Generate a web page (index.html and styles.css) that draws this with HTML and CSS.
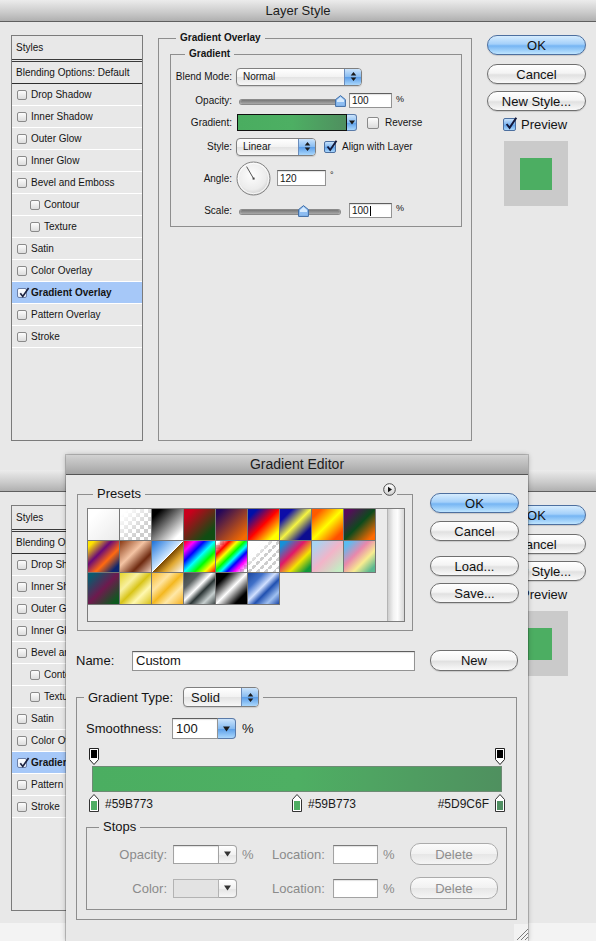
FILE: index.html
```html
<!DOCTYPE html>
<html>
<head>
<meta charset="utf-8">
<title>Layer Style / Gradient Editor</title>
<link rel="stylesheet" href="styles.css">
</head>
<body>
<div class="screen">

  <section class="win ls ls-top">
    <header class="titlebar">Layer Style</header>
    <div class="ls-body">
      <ul class="stylelist">
        <li class="head">Styles</li>
        <li class="blend">Blending Options: Default</li>
        <li><span class="cb"></span>Drop Shadow</li>
        <li><span class="cb"></span>Inner Shadow</li>
        <li><span class="cb"></span>Outer Glow</li>
        <li><span class="cb"></span>Inner Glow</li>
        <li><span class="cb"></span>Bevel and Emboss</li>
        <li class="sub"><span class="cb"></span>Contour</li>
        <li class="sub"><span class="cb"></span>Texture</li>
        <li><span class="cb"></span>Satin</li>
        <li><span class="cb"></span>Color Overlay</li>
        <li class="sel"><span class="cb chk"><svg width="12" height="12" viewBox="0 0 12 12"><path d="M2.3 6.2 L4.8 9.4 L10.6 1" fill="none" stroke="#1d2340" stroke-width="1.7"/></svg></span>Gradient Overlay</li>
        <li><span class="cb"></span>Pattern Overlay</li>
        <li><span class="cb"></span>Stroke</li>
      </ul>
      <div class="group g-outer">
        <span class="gtitle">Gradient Overlay</span>
        <div class="group g-inner">
          <span class="gtitle">Gradient</span>
          <div class="frow h25"><span class="lbl">Blend Mode:</span><div class="popup pw126"><span class="val">Normal</span><span class="arr"><svg width="7" height="11" viewBox="0 0 7 11"><path d="M3.5 1 6.3 4.5H.7z M3.5 10 .7 6.5h5.6z" fill="#1a1a1a"/></svg></span></div></div>
          <div class="frow h23"><span class="lbl">Opacity:</span><div class="slider"><span class="thumb" style="left:100%"><svg width="11" height="12" viewBox="0 0 11 12"><path d="M5.5 .6 L10.4 4.6 V11.4 H.6 V4.6 Z" fill="#8dbdf2" stroke="#3d6aa3"/><path d="M5.5 2 L9 5 V7 H2 V5 Z" fill="#d6eafd"/></svg></span></div><span class="fld num">100</span><span class="unit u2">%</span></div>
          <div class="frow h21"><span class="lbl">Gradient:</span><div class="gswatch"><span class="gfill"></span><span class="garr"><svg width="6" height="5" viewBox="0 0 6 5"><path d="M0 .5h6l-3 4z" fill="#1a1a1a"/></svg></span></div><span class="cb c12 ml10"></span><span class="cbl">Reverse</span></div>
          <div class="frow h27"><span class="lbl">Style:</span><div class="popup pw80"><span class="val">Linear</span><span class="arr"><svg width="7" height="11" viewBox="0 0 7 11"><path d="M3.5 1 6.3 4.5H.7z M3.5 10 .7 6.5h5.6z" fill="#1a1a1a"/></svg></span></div><span class="cb c12 on ml8"><svg width="13" height="13" viewBox="0 0 13 13"><path d="M2.5 6.5 L5.2 10 L11.5 .8" fill="none" stroke="#14183a" stroke-width="1.9"/></svg></span><span class="cbl">Align with Layer</span></div>
          <div class="frow h36"><span class="lbl">Angle:</span><svg class="dial" width="35" height="35" viewBox="0 0 35 35"><defs><radialGradient id="dg1" cx="45%" cy="40%" r="62%"><stop offset="0" stop-color="#fdfdfd"/><stop offset=".7" stop-color="#ececec"/><stop offset="1" stop-color="#cdcdcd"/></radialGradient></defs><circle cx="17.5" cy="17.5" r="16.5" fill="url(#dg1)" stroke="#838383"/><circle cx="17.5" cy="17.5" r="15.2" fill="none" stroke="#fff" stroke-opacity=".8"/><line x1="17.5" y1="17.5" x2="10.6" y2="5.6" stroke="#555" stroke-width="1"/><rect x="16.6" y="16.6" width="2" height="2" fill="#444"/></svg><span class="fld ang">120</span><span class="unit u5">°</span></div>
          <div class="frow h29"><span class="lbl">Scale:</span><div class="slider"><span class="thumb" style="left:63%"><svg width="11" height="12" viewBox="0 0 11 12"><path d="M5.5 .6 L10.4 4.6 V11.4 H.6 V4.6 Z" fill="#8dbdf2" stroke="#3d6aa3"/><path d="M5.5 2 L9 5 V7 H2 V5 Z" fill="#d6eafd"/></svg></span></div><span class="fld num">100<i class="caret"></i></span><span class="unit u6">%</span></div>
        </div>
      </div>
      <div class="side">
        <div class="btn dflt">OK</div>
        <div class="btn mt9">Cancel</div>
        <div class="btn mt7">New Style...</div>
        <div class="prevrow"><span class="cb c13 on"><svg width="14" height="14" viewBox="0 0 14 14"><path d="M2.6 7 L5.6 10.8 L12.3 .8" fill="none" stroke="#14183a" stroke-width="2"/></svg></span>Preview</div>
        <div class="prevbox"><div class="prevsq"></div></div>
      </div>
    </div>
  </section>

  <section class="win ls ls-back">
    <header class="titlebar">Layer Style</header>
    <div class="ls-body">
      <ul class="stylelist">
        <li class="head">Styles</li>
        <li class="blend">Blending Options: Default</li>
        <li><span class="cb"></span>Drop Shadow</li>
        <li><span class="cb"></span>Inner Shadow</li>
        <li><span class="cb"></span>Outer Glow</li>
        <li><span class="cb"></span>Inner Glow</li>
        <li><span class="cb"></span>Bevel and Emboss</li>
        <li class="sub"><span class="cb"></span>Contour</li>
        <li class="sub"><span class="cb"></span>Texture</li>
        <li><span class="cb"></span>Satin</li>
        <li><span class="cb"></span>Color Overlay</li>
        <li class="sel"><span class="cb chk"><svg width="12" height="12" viewBox="0 0 12 12"><path d="M2.3 6.2 L4.8 9.4 L10.6 1" fill="none" stroke="#1d2340" stroke-width="1.7"/></svg></span>Gradient Overlay</li>
        <li><span class="cb"></span>Pattern Overlay</li>
        <li><span class="cb"></span>Stroke</li>
      </ul>
      <div class="group g-outer">
        <span class="gtitle">Gradient Overlay</span>
        <div class="group g-inner">
          <span class="gtitle">Gradient</span>
        </div>
      </div>
      <div class="side">
        <div class="btn dflt">OK</div>
        <div class="btn mt9">Cancel</div>
        <div class="btn mt7">New Style...</div>
        <div class="prevrow"><span class="cb c13 on"><svg width="14" height="14" viewBox="0 0 14 14"><path d="M2.6 7 L5.6 10.8 L12.3 .8" fill="none" stroke="#14183a" stroke-width="2"/></svg></span>Preview</div>
        <div class="prevbox"><div class="prevsq"></div></div>
      </div>
    </div>
  </section>

  <section class="win ge">
    <header class="titlebar">Gradient Editor</header>
    <div class="ge-top">
      <div class="group g-presets">
        <span class="gtitle">Presets</span>
        <span class="menu-btn"><svg width="13" height="13" viewBox="0 0 13 13"><defs><linearGradient id="mg" x1="0" y1="0" x2="0" y2="1"><stop offset="0" stop-color="#ffffff"/><stop offset="1" stop-color="#cfcfcf"/></linearGradient></defs><circle cx="6.5" cy="6.5" r="5.8" fill="url(#mg)" stroke="#4a4a4a"/><path d="M5 3.7 L9 6.5 L5 9.3Z" fill="#111"/></svg></span>
        <div class="swpanel">
          <div class="swgrid">
            <span class="sw p1"></span><span class="sw p2"></span><span class="sw p3"></span><span class="sw p4"></span><span class="sw p5"></span><span class="sw p6"></span><span class="sw p7"></span><span class="sw p8"></span><span class="sw p9"></span>
            <span class="sw p10"></span><span class="sw p11"></span><span class="sw p12"></span><span class="sw p13"></span><span class="sw p14"></span><span class="sw p15"></span><span class="sw p16"></span><span class="sw p17"></span><span class="sw p18"></span>
            <span class="sw p19"></span><span class="sw p20"></span><span class="sw p21"></span><span class="sw p22"></span><span class="sw p23"></span><span class="sw p24"></span>
          </div>
          <div class="scroll"></div>
        </div>
      </div>
      <div class="ge-btns">
        <div class="btn dflt">OK</div>
        <div class="btn mt8">Cancel</div>
        <div class="btn mt15">Load...</div>
        <div class="btn mt7">Save...</div>
      </div>
    </div>

    <div class="namerow"><span class="lbl">Name:</span><span class="fld name-fld">Custom</span><div class="btn newbtn">New</div></div>

    <div class="group g-type">
      <div class="type-title">Gradient Type:<div class="popup ptype"><span class="val">Solid</span><span class="arr"><svg width="7" height="11" viewBox="0 0 7 11"><path d="M3.5 1 6.3 4.5H.7z M3.5 10 .7 6.5h5.6z" fill="#1a1a1a"/></svg></span></div></div>
      <div class="srow"><span class="lbl">Smoothness:</span><div class="combo"><span class="fld">100</span><span class="darr blue"><svg width="7" height="6" viewBox="0 0 7 6"><path d="M0 .5h7l-3.5 5z" fill="#1a1a1a"/></svg></span></div><span class="pctl">%</span></div>

      <div class="gwrap">
        <div class="track otrack">
          <span class="ostop" style="left:0%"><svg width="10" height="17" viewBox="0 0 10 17"><path d="M.5 .5h9v11l-4.5 5-4.5-5z" fill="#fff" stroke="#222"/><rect x="2" y="2" width="6" height="8" fill="#000"/></svg></span>
          <span class="ostop" style="left:100%"><svg width="10" height="17" viewBox="0 0 10 17"><path d="M.5 .5h9v11l-4.5 5-4.5-5z" fill="#fff" stroke="#222"/><rect x="2" y="2" width="6" height="8" fill="#000"/></svg></span>
        </div>
        <div class="gbar"></div>
        <div class="track ctrack">
          <span class="cstop" style="left:0%"><svg width="10" height="18" viewBox="0 0 10 18"><path d="M.5 17.5v-12l4.5-5 4.5 5v12z" fill="#fff" stroke="#333"/><rect x="2" y="7" width="6" height="9" fill="#4fae63"/></svg><span class="clbl">#59B773</span></span>
          <span class="cstop" style="left:50%"><svg width="10" height="18" viewBox="0 0 10 18"><path d="M.5 17.5v-12l4.5-5 4.5 5v12z" fill="#fff" stroke="#333"/><rect x="2" y="7" width="6" height="9" fill="#4fae63"/></svg><span class="clbl">#59B773</span></span>
          <span class="cstop end" style="left:100%"><svg width="10" height="18" viewBox="0 0 10 18"><path d="M.5 17.5v-12l4.5-5 4.5 5v12z" fill="#fff" stroke="#333"/><rect x="2" y="7" width="6" height="9" fill="#508f62"/></svg><span class="clbl">#5D9C6F</span></span>
        </div>
      </div>

      <div class="group g-stops">
        <span class="gtitle">Stops</span>
        <div class="strow r1"><span class="lbl">Opacity:</span><span class="fld sf"></span><span class="darr gray"><svg width="7" height="6" viewBox="0 0 7 6"><path d="M0 .5h7l-3.5 5z" fill="#333"/></svg></span><span class="pct">%</span><span class="loc">Location:</span><span class="fld lf"></span><span class="pct2">%</span><div class="btn dis">Delete</div></div>
        <div class="strow r2"><span class="lbl">Color:</span><span class="well"></span><span class="darr gray"><svg width="7" height="6" viewBox="0 0 7 6"><path d="M0 .5h7l-3.5 5z" fill="#333"/></svg></span><span class="pct"></span><span class="loc">Location:</span><span class="fld lf"></span><span class="pct2">%</span><div class="btn dis">Delete</div></div>
      </div>
    </div>

    <div class="grip"><svg width="13" height="13" viewBox="0 0 13 13"><path d="M2 13 L13 2 M6 13 L13 6 M10 13 L13 10" stroke="#7a7a7a" stroke-width="1"/></svg></div>
  </section>

</div>
</body>
</html>
```

FILE: styles.css
```css
* { box-sizing: border-box; }
html, body { margin: 0; padding: 0; }
body {
  background: #f3f3f3;
  font-family: "Liberation Sans", Arial, sans-serif;
  color: #141414;
}
.screen { position: relative; width: 596px; height: 941px; overflow: hidden; }

/* windows placed on the "desktop" */
.win { position: absolute; background: #e8e8e8; }
.ls { left: 0; width: 596px; }
.ls-top { top: 0; height: 470px; }
.ls-back { top: 470px; height: 453px; }
.ge {
  left: 66px; top: 455px; width: 462px; height: 486px;
  box-shadow: 0 0 0 1px rgba(0,0,0,.18), 0 0 5px rgba(0,0,0,.28);
}

.titlebar {
  height: 22px;
  border-bottom: 1px solid #5f5f5f;
  background: linear-gradient(#ececec, #cdcdcd 55%, #b0b0b0);
  text-align: center;
  font-size: 13px;
  line-height: 21px;
  color: #1c1c1c;
}
.ge .titlebar {
  height: 20px;
  line-height: 19px;
  font-size: 14px;
  background: linear-gradient(#d2d2d2, #b9b9b9 55%, #a4a4a4);
  border-bottom-color: #555;
}

/* ---------- Layer Style ---------- */
.ls-body { display: flex; align-items: flex-start; padding: 13px 0 0 11px; }

.stylelist {
  list-style: none; margin: 0; padding: 0;
  width: 132px; height: 406px; flex: none;
  border: 1px solid #7b7b7b;
  font-size: 10px;
}
.stylelist li {
  display: flex; align-items: center; gap: 4px;
  height: 22px; padding-left: 5px;
  border-bottom: 1px solid #fff;
  white-space: nowrap; overflow: hidden;
}
.stylelist li.head { height: 26px; border-bottom: 3px double #3a3a3a; padding-left: 4px; }
.stylelist li.blend { border-bottom-color: #2e2e2e; padding-left: 4px; }
.stylelist li.sub { padding-left: 18px; }
.stylelist li.sel { background: #a6c8f8; font-weight: bold; }

.cb {
  position: relative; flex: none;
  width: 10px; height: 10px;
  border: 1px solid #8a8a8a; border-radius: 2px;
  background: linear-gradient(#fdfdfd, #dcdcdc);
}
.cb svg { position: absolute; left: 0; top: -2px; overflow: visible; }
.cb.chk { border-color: #6b7fa8; background: linear-gradient(#ffffff, #e4ecf8); }
.cb.c12 { width: 12px; height: 12px; }
.cb.c13 { width: 13px; height: 13px; }
.cb.on { border-color: #4c6f9f; background: linear-gradient(#c8e2fc, #7db4ef 50%, #5c9fe9 51%, #aad7fc); }
.ml10 { margin-left: 10px; }
.ml8 { margin-left: 8px; }
.cbl { margin-left: 6px; white-space: nowrap; }

.group { position: relative; border: 1px solid #8e8e8e; flex: none; }
.gtitle {
  position: absolute; top: -7px;
  padding: 0 4px; background: #e8e8e8;
  font-size: 10px; line-height: 12px; font-weight: bold;
  white-space: nowrap;
}
.g-outer { margin: 3px 0 0 15px; width: 314px; height: 403px; }
.g-outer > .gtitle { left: 17px; }
.g-inner { margin: 15px 0 0 11px; width: 292px; height: 173px; padding-top: 9px; }
.g-inner > .gtitle { left: 14px; }

.frow { display: flex; align-items: center; font-size: 10px; }
.frow > .lbl { flex: none; width: 61px; margin-right: 4px; text-align: right; white-space: nowrap; }
.h25 { height: 25px; } .h23 { height: 23px; } .h21 { height: 21px; }
.h27 { height: 27px; } .h36 { height: 36px; } .h29 { height: 29px; }

.popup {
  display: flex; flex: none;
  height: 18px;
  border: 1px solid #7f7f7f; border-radius: 4px;
  background: linear-gradient(#ffffff, #f2f2f2 50%, #e3e3e3 51%, #f7f7f7);
  box-shadow: 0 1px 1px rgba(0,0,0,.12);
  overflow: hidden;
}
.popup .val { flex: 1; padding-left: 6px; display: flex; align-items: center; }
.popup .arr {
  width: 17px; display: flex; align-items: center; justify-content: center;
  border-left: 1px solid #6a8cbc;
  background: linear-gradient(#cbe4fc, #86bbf1 50%, #5a9de8 51%, #aad7fc);
}
.pw126 { width: 126px; }
.pw80 { width: 80px; }

.slider {
  position: relative; flex: none;
  width: 100px; height: 4px; margin: 2px 0 0 4px;
  border-radius: 2px;
  background: linear-gradient(#777, #a9a9a9);
  box-shadow: 0 0 0 1px #8a8a8a;
}
.thumb { position: absolute; top: -5px; margin-left: -5.5px; width: 11px; height: 12px; }
.thumb svg { display: block; }

.fld {
  flex: none;
  display: flex; align-items: center;
  height: 15px;
  background: #fff;
  border: 1px solid #939393; border-top-color: #5f5f5f;
  box-shadow: inset 0 1px 1px rgba(0,0,0,.12);
  padding-left: 2px;
  font-size: 10px;
}
.fld.num { width: 43px; margin-left: 9px; }
.fld.ang { width: 49px; height: 16px; margin-left: 6px; }
.caret { display: inline-block; width: 1px; height: 10px; background: #000; margin-left: 1px; }
.unit { margin-left: 4px; font-size: 9px; align-self: flex-start; }
.u2 { margin-top: 5px; }
.u5 { margin-top: 10px; }
.u6 { margin-top: 7px; }
.dial { flex: none; display: block; }

.gswatch { display: flex; flex: none; width: 120px; height: 17px; margin-left: 1px; }
.gfill {
  flex: 1; border: 1px solid #111;
  background: linear-gradient(to right, #4aad60 0%, #4daf63 50%, #4e9f61 75%, #4f8f5f 100%);
}
.garr {
  width: 10px; display: flex; align-items: center; justify-content: center;
  border: 1px solid #5a7aa8; border-left: 0; border-radius: 0 3px 3px 0;
  background: linear-gradient(#cbe4fc, #86bbf1 50%, #5a9de8 51%, #aad7fc);
}

.side { margin-left: 15px; width: 99px; flex: none; display: flex; flex-direction: column; }
.btn {
  display: flex; align-items: center; justify-content: center;
  height: 20px; flex: none;
  border: 1px solid #6f6f6f; border-radius: 10px;
  background: linear-gradient(#ffffff, #f4f4f4 45%, #e1e1e1 55%, #f9f9f9);
  box-shadow: 0 1px 1px rgba(0,0,0,.14);
  font-size: 13px; color: #111; white-space: nowrap;
}
.btn.dflt { border-color: #4d6f9f; background: linear-gradient(#d6ecfe, #a4d0fa 45%, #76b5f3 55%, #bfe5ff); }
.btn.dis { border-color: #ababab; color: #8e8e8e; background: linear-gradient(#fbfbfb, #f1f1f1 50%, #e6e6e6 51%, #f5f5f5); box-shadow: none; }
.mt7 { margin-top: 7px; } .mt8 { margin-top: 8px; } .mt9 { margin-top: 9px; } .mt15 { margin-top: 15px; }

.prevrow { display: flex; align-items: center; gap: 5px; margin-top: 6px; height: 15px; padding-left: 16px; font-size: 13px; }
.prevbox { margin: 9px 0 0 17px; width: 64px; height: 65px; background: #cacaca; padding: 17px 0 0 16px; }
.prevsq { width: 32px; height: 32px; background: #4cae62; }

/* ---------- Gradient Editor ---------- */
.ge-top { display: flex; align-items: flex-start; }
.g-presets { margin: 19px 0 0 11px; width: 336px; height: 137px; }
.g-presets > .gtitle, .g-stops > .gtitle { top: -9px; font-size: 13px; line-height: 16px; font-weight: normal; }
.g-presets > .gtitle { left: 15px; }
.menu-btn { position: absolute; left: 304px; top: -12px; width: 15px; height: 14px; background: #e8e8e8; padding-left: 1px; }
.menu-btn svg { display: block; }

.swpanel { display: flex; margin: 13px 0 0 9px; width: 318px; height: 114px; border: 1px solid #7c7c7c; background: #ebebeb; }
.swgrid { flex: 1; display: grid; grid-template-columns: repeat(9, 32px); grid-auto-rows: 32px; align-content: start; }
.sw { border-right: 1px solid #767676; border-bottom: 1px solid #767676; }
.scroll { width: 17px; border-left: 1px solid #b4b4b4; background: linear-gradient(to right, #cdcdcd, #f3f3f3 35%, #fdfdfd 60%, #d7d7d7); }

.ge-btns { margin: 18px 0 0 17px; width: 89px; display: flex; flex-direction: column; }

.namerow { display: flex; align-items: center; margin-top: 19px; padding-left: 10px; height: 21px; font-size: 13px; }
.namerow .lbl { width: 56px; flex: none; }
.fld.name-fld { width: 283px; height: 20px; font-size: 13px; padding-left: 3px; }
.newbtn { margin-left: 15px; width: 88px; height: 21px; }

.g-type { margin: 26px 0 0 10px; width: 441px; height: 223px; }
.type-title {
  position: absolute; left: 7px; top: -11px;
  display: flex; align-items: center; height: 20px;
  padding: 0 4px; background: #e8e8e8;
  font-size: 13px; white-space: nowrap;
}
.popup.ptype { width: 76px; height: 20px; margin-left: 10px; }
.popup.ptype .val { padding-left: 7px; }

.srow { display: flex; align-items: center; margin-top: 20px; padding-left: 9px; height: 21px; font-size: 13px; }
.srow .lbl { width: 86px; flex: none; }
.combo { display: flex; height: 21px; }
.combo .fld { width: 46px; height: 21px; font-size: 13px; padding-left: 3px; }
.darr {
  width: 18px; flex: none; display: flex; align-items: center; justify-content: center;
  border: 1px solid #7f7f7f; border-left: 0; border-radius: 0 4px 4px 0;
}
.darr.blue { border-color: #5a7aa8; background: linear-gradient(#cbe4fc, #86bbf1 50%, #5a9de8 51%, #aad7fc); }
.darr.gray { height: 19px; border-color: #a5a5a5; background: linear-gradient(#ffffff, #f1f1f1 50%, #e4e4e4 51%, #f6f6f6); }
.pctl { margin-left: 6px; }

.gwrap { position: relative; margin: 9px 0 0 15px; width: 410px; height: 66px; padding-top: 18px; }
.track { position: absolute; left: 2px; right: 2px; height: 0; }
.otrack { top: 0; }
.ctrack { top: 46px; }
.gbar {
  height: 26px;
  border: 1px solid #6d8a74;
  background: linear-gradient(to right, #4bae61 0%, #4eaf63 50%, #4fa462 68%, #4f905f 100%);
}
.ostop, .cstop { position: absolute; top: 0; width: 10px; margin-left: -5px; }
.ostop svg, .cstop svg { display: block; }
.clbl { position: absolute; left: 16px; top: 3px; font-size: 12px; line-height: 14px; white-space: nowrap; color: #1a1a1a; }
.cstop.end .clbl { left: auto; right: 16px; }

.g-stops { margin: 13px 0 0 9px; width: 421px; height: 83px; }
.g-stops > .gtitle { left: 12px; }
.strow { display: flex; align-items: center; height: 22px; font-size: 13px; color: #8b8b8b; }
.strow.r1 { margin-top: 15px; }
.strow.r2 { margin-top: 12px; }
.strow .lbl { width: 80px; flex: none; margin-right: 6px; text-align: right; }
.strow .fld { height: 19px; border-color: #a3a3a3; border-top-color: #7a7a7a; }
.fld.sf { width: 46px; }
.fld.lf { width: 45px; }
.well { width: 46px; height: 19px; flex: none; background: #e3e3e3; border: 1px solid #b3b3b3; }
.pct { width: 30px; margin-left: 5px; flex: none; }
.loc { width: 61px; flex: none; }
.pct2 { width: 27px; margin-left: 5px; flex: none; }
.strow .btn { width: 88px; height: 22px; }

.grip { position: absolute; right: 0; bottom: 0; width: 14px; height: 17px; background: #f2f2f2; padding: 3px 0 0 1px; }
.grip svg { display: block; }

/* preset gradient swatches */
.p1 { background: linear-gradient(135deg, #ffffff 20%, #eaeaea); }
.p2 { background: linear-gradient(135deg, #fff 12%, rgba(255,255,255,0) 72%), conic-gradient(#cdcdcd 25%, #fff 0 50%, #cdcdcd 0 75%, #fff 0) 0 0 / 8px 8px; }
.p3 { background: linear-gradient(135deg, #000 15%, #fff 85%); }
.p4 { background: linear-gradient(135deg, #c9001c 15%, #0f4d12 80%); }
.p5 { background: linear-gradient(135deg, #24075a 10%, #f46a00 90%); }
.p6 { background: linear-gradient(135deg, #0010a8 15%, #ff0000 50%, #ffff00 85%); }
.p7 { background: linear-gradient(135deg, #0c0ca8 20%, #f5f542 50%, #0c0c90 80%); }
.p8 { background: linear-gradient(135deg, #ff5a00 15%, #ffff00 50%, #ff5000 85%); }
.p9 { background: linear-gradient(135deg, #5a0a5e 10%, #0d4a1c 50%, #ff6a00 90%); }
.p10 { background: linear-gradient(135deg, #ffe400 10%, #6a0a78 38%, #ff6a10 62%, #0a2670 88%); }
.p11 { background: linear-gradient(135deg, #8a3a14 0%, #f4c4a4 40%, #6e2a10 70%, #f0d0c0 100%); }
.p12 { background: linear-gradient(135deg, #1a70d8 0%, #cfe8ff 48%, #ffffff 50%, #7a4800 51%, #e0a830 70%, #ffffff 100%); }
.p13 { background: linear-gradient(135deg, #f00 0%, #f0f 17%, #00f 33%, #0ff 50%, #0f0 67%, #ff0 83%, #f00 100%); }
.p14 { background: linear-gradient(135deg, rgba(255,0,0,0) 5%, #f00 22%, #ff0 35%, #0f0 47%, #0ff 57%, #00f 67%, #f0f 79%, rgba(255,0,255,0) 95%), conic-gradient(#cdcdcd 25%, #fff 0 50%, #cdcdcd 0 75%, #fff 0) 0 0 / 8px 8px; }
.p15 { background: linear-gradient(135deg, #fff 25%, rgba(255,255,255,0) 45%), repeating-linear-gradient(135deg, rgba(255,255,255,.95) 0 3px, rgba(255,255,255,0) 3px 6px), conic-gradient(#cdcdcd 25%, #fff 0 50%, #cdcdcd 0 75%, #fff 0) 0 0 / 8px 8px; }
.p16 { background: linear-gradient(135deg, #1590d8 10%, #e01868 40%, #f4e400 65%, #10983a 90%); }
.p17 { background: linear-gradient(135deg, #a8d4f2 10%, #f2b4c8 50%, #c4ecc4 90%); }
.p18 { background: linear-gradient(135deg, #5abcf2 10%, #e888ac 40%, #f8ec90 65%, #5ab890 90%); }
.p19 { background: linear-gradient(135deg, #0a5a6e 10%, #6e1a4e 50%, #0c5a1e 90%); }
.p20 { background: linear-gradient(135deg, #e4d42a 0%, #f8f0a0 30%, #d8c418 50%, #fff8b0 70%, #d8c018 100%); }
.p21 { background: linear-gradient(135deg, #f8b828 0%, #ffe4a0 30%, #f4b820 50%, #ffe8a8 70%, #f4b020 100%); }
.p22 { background: linear-gradient(135deg, #3a4444 0%, #5a6060 25%, #ffffff 45%, #2a3434 60%, #c8d0d0 80%, #404848 100%); }
.p23 { background: linear-gradient(135deg, #000 20%, #fff 50%, #000 80%); }
.p24 { background: linear-gradient(135deg, #1c48a0 0%, #4070c8 25%, #d0e0ff 45%, #2050b0 60%, #a0c0f0 80%, #1c48a8 100%); }
```
